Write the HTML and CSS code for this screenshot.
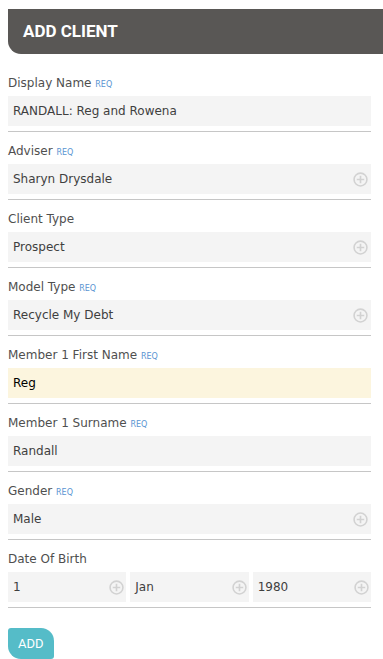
FILE: index.html
```html
<!DOCTYPE html>
<html lang="en">
<head>
    <meta charset="UTF-8">
    <meta name="viewport" content="width=device-width, initial-scale=1.0">
    <title>Add Client</title>
    <link rel="stylesheet" href="styles.css">
</head>
<body>
    <div class="header">ADD CLIENT</div>

    <div class="form">
        <div class="group">
            <div class="label">Display Name <span class="req">REQ</span></div>
            <div class="field">RANDALL: Reg and Rowena</div>
        </div>
        <div class="group">
            <div class="label">Adviser <span class="req">REQ</span></div>
            <div class="field select">Sharyn Drysdale<svg class="plus" viewBox="0 0 14 14"><circle cx="7" cy="7" r="6"/><path d="M7 3.5v7M3.5 7h7"/></svg></div>
        </div>
        <div class="group">
            <div class="label">Client Type</div>
            <div class="field select">Prospect<svg class="plus" viewBox="0 0 14 14"><circle cx="7" cy="7" r="6"/><path d="M7 3.5v7M3.5 7h7"/></svg></div>
        </div>
        <div class="group">
            <div class="label">Model Type <span class="req">REQ</span></div>
            <div class="field select">Recycle My Debt<svg class="plus" viewBox="0 0 14 14"><circle cx="7" cy="7" r="6"/><path d="M7 3.5v7M3.5 7h7"/></svg></div>
        </div>
        <div class="group">
            <div class="label">Member 1 First Name <span class="req">REQ</span></div>
            <div class="field active">Reg</div>
        </div>
        <div class="group">
            <div class="label">Member 1 Surname <span class="req">REQ</span></div>
            <div class="field">Randall</div>
        </div>
        <div class="group">
            <div class="label">Gender <span class="req">REQ</span></div>
            <div class="field select">Male<svg class="plus" viewBox="0 0 14 14"><circle cx="7" cy="7" r="6"/><path d="M7 3.5v7M3.5 7h7"/></svg></div>
        </div>
        <div class="group">
            <div class="label">Date Of Birth</div>
            <div class="date-row">
                <div class="field select">1<svg class="plus" viewBox="0 0 14 14"><circle cx="7" cy="7" r="6"/><path d="M7 3.5v7M3.5 7h7"/></svg></div>
                <div class="field select">Jan<svg class="plus" viewBox="0 0 14 14"><circle cx="7" cy="7" r="6"/><path d="M7 3.5v7M3.5 7h7"/></svg></div>
                <div class="field select">1980<svg class="plus" viewBox="0 0 14 14"><circle cx="7" cy="7" r="6"/><path d="M7 3.5v7M3.5 7h7"/></svg></div>
            </div>
        </div>
    </div>

    <button class="add-btn">ADD</button>
</body>
</html>
```

FILE: styles.css
```css
body { margin: 0; padding: 9px 0 0 8px; font-family: "DejaVu Sans", Verdana, sans-serif; font-size: 12px; color: #555; background: #fff; overflow: hidden; }

.header { height: 45px; line-height: 45px; padding-left: 15px; background: #595755; color: #fff; font-family: Roboto, "Liberation Sans", sans-serif; font-weight: 700; font-size: 17px; border-radius: 0 0 0 13px; margin-bottom: 10px; }

.form { width: 363px; }
.group { padding-top: 12px; border-bottom: 1px solid #c6c6c6; padding-bottom: 5px; }
.label { height: 14px; line-height: 14px; margin-bottom: 6px; color: #4f4f4f; white-space: nowrap; }
.req { font-size: 8px; line-height: 1; color: #5a95d2; }

.field { box-sizing: border-box; height: 30px; padding: 0 3px 0 5px; background: #f4f4f4; color: #3f3f3f; display: flex; align-items: center; justify-content: space-between; }
.field.active { background: #fcf5de; color: #000; }
.plus { width: 15px; height: 15px; flex: none; fill: none; stroke: #d2d2d2; stroke-width: 1.5; }

.date-row { display: grid; grid-template-columns: 1fr 1fr 1fr; gap: 4px; }
.date-row .field { padding-right: 2px; }

.add-btn { display: block; margin-top: 20px; height: 31px; padding: 0 10px; border: none; background: #55bcc8; color: #fff; font-family: Roboto, "Liberation Sans", sans-serif; font-size: 13px; line-height: 31px; border-radius: 3px 13px 3px 13px; cursor: pointer; }
```
